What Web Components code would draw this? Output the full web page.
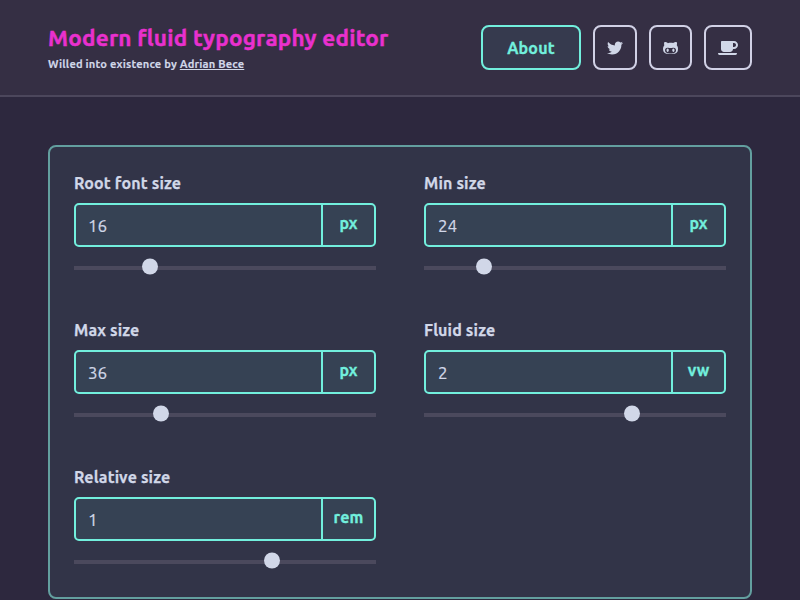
<!DOCTYPE html>
<html lang="en">
<head>
<meta charset="utf-8">
<title>Modern fluid typography editor</title>
<style>
html,body{margin:0;height:600px;overflow:hidden}
body{background:#2d283e;color:#d1d7e8;font-family:Ubuntu,"Noto Sans","Open Sans",sans-serif;font-size:16px}
</style>
</head>
<body>
<fluid-app></fluid-app>
<script>
const define = (name, html, setup) => customElements.define(name, class extends HTMLElement {
  constructor() {
    super();
    this.attachShadow({ mode: 'open' }).innerHTML = html;
  }
  connectedCallback() { if (setup) setup(this, this.shadowRoot); }
});

define('nav-button', `
<style>
:host{box-sizing:border-box;display:flex;align-items:center;justify-content:center;height:45px;border:2px solid #d1d1e6;border-radius:8px;color:#d1d7e8}
:host([primary]){border-color:#72efdd;color:#72efdd;background:#363a4e;font-weight:700;font-size:16px;letter-spacing:.2px;-webkit-text-stroke:.3px currentColor}
</style><slot></slot>`);

define('app-header', `
<style>
:host{box-sizing:border-box;display:flex;justify-content:space-between;align-items:flex-start;height:97px;padding:25px 48px 0;background:#352f44;border-bottom:2px solid #4c475c}
h1{margin:0;color:#e930ce;font-size:22.5px;line-height:26px;font-weight:700;white-space:nowrap;letter-spacing:.22px;-webkit-text-stroke:.4px currentColor}
p{margin:6px 0 0;font-size:11.11px;line-height:14px;font-weight:700;white-space:nowrap;letter-spacing:.17px;-webkit-text-stroke:.15px currentColor}
a{color:inherit;text-decoration:underline}
nav{display:flex;gap:12px}
svg{display:block;height:16px;fill:currentColor}
</style>
<div><h1>Modern fluid typography editor</h1><p>Willed into existence by <a href="#">Adrian Bece</a></p></div>
<nav>
<nav-button primary style="width:100px">About</nav-button>
<nav-button style="width:44px"><svg viewBox="0 0 512 512"><path d="M459.37 151.716c.325 4.548.325 9.097.325 13.645 0 138.72-105.583 298.558-298.558 298.558-59.452 0-114.68-17.219-161.137-47.106 8.447.974 16.568 1.299 25.34 1.299 49.055 0 94.213-16.568 130.274-44.832-46.132-.975-84.792-31.188-98.112-72.772 6.498.974 12.995 1.624 19.818 1.624 9.421 0 18.843-1.3 27.614-3.573-48.081-9.747-84.143-51.98-84.143-102.985v-1.299c13.969 7.797 30.214 12.67 47.431 13.319-28.264-18.843-46.781-51.005-46.781-87.391 0-19.492 5.197-37.36 14.294-52.954 51.655 63.675 129.3 105.258 216.365 109.807-1.624-7.797-2.599-15.918-2.599-24.04 0-57.828 46.782-104.934 104.934-104.934 30.213 0 57.502 12.67 76.67 33.137 23.715-4.548 46.456-13.32 66.599-25.34-7.798 24.366-24.366 44.833-46.132 57.827 21.117-2.273 41.584-8.122 60.426-16.243-14.292 20.791-32.161 39.308-52.628 54.253z"/></svg></nav-button>
<nav-button style="width:43px"><svg viewBox="0 0 480 512"><path d="M186.1 328.7c0 20.9-10.9 55.1-36.7 55.1s-36.7-34.2-36.7-55.1 10.9-55.1 36.7-55.1 36.7 34.2 36.7 55.1zM480 278.2c0 31.9-3.2 65.7-17.5 95-37.9 76.6-142.1 74.8-216.7 74.8-75.8 0-186.2 2.7-225.6-74.8-14.6-29-20.2-63.1-20.2-95 0-41.9 13.9-81.5 41.5-113.6-5.2-15.8-7.7-32.4-7.7-48.8 0-21.5 4.9-32.3 14.6-51.8 45.3 0 74.3 9 108.8 36 29-6.9 58.8-10 88.7-10 27 0 54.2 2.9 80.4 9.2 34-26.7 63-35.2 107.8-35.2 9.8 19.5 14.6 30.3 14.6 51.8 0 16.4-2.6 32.7-7.7 48.2 27.5 32.4 39 72.3 39 114.2zm-64.3 50.5c0-43.9-26.7-82.6-73.5-82.6-18.9 0-37 3.4-56 6-14.9 2.3-29.8 3.2-45.1 3.2-15.2 0-30.1-.9-45.1-3.2-18.7-2.6-37-6-56-6-46.8 0-73.5 38.7-73.5 82.6 0 87.8 80.4 101.3 150.4 101.3h48.2c70.3 0 150.6-13.4 150.6-101.3zm-82.6-55.1c-25.8 0-36.7 34.2-36.7 55.1s10.9 55.1 36.7 55.1 36.7-34.2 36.7-55.1-10.9-55.1-36.7-55.1z"/></svg></nav-button>
<nav-button style="width:48px"><svg viewBox="0 0 640 512"><path d="M192 384h192c53 0 96-43 96-96h32c70.6 0 128-57.4 128-128S582.6 32 512 32H120c-13.3 0-24 10.7-24 24v232c0 53 43 96 96 96zM512 96c35.3 0 64 28.7 64 64s-28.7 64-64 64h-32V96h32zm47.7 384H48.3c-47.6 0-61-64-36-64h583.3c25 0 11.8 64-35.9 64z"/></svg></nav-button>
</nav>`);

define('range-slider', `
<style>
:host{display:grid;height:16px;margin-top:11px;align-items:center}
.track,.thumb{grid-area:1/1}
.track{height:4px;background:#4b495d;margin-top:3px}
.thumb{width:16px;height:16px;border-radius:50%;background:#d1d7e8;margin-left:var(--at,0);transform:translateY(.5px)}
</style><div class="track"></div><div class="thumb"></div>`);

define('size-field', `
<style>
:host{display:block;height:103px}
label{display:block;height:24px;line-height:25px;margin-bottom:8px;font-size:16px;font-weight:700;letter-spacing:.14px;-webkit-text-stroke:.25px currentColor}
.box{box-sizing:border-box;display:flex;height:44px;border:2px solid #72efdd;border-radius:5px;background:#364254}
.value{flex:1;padding-left:12px;line-height:42px;font-size:17px;-webkit-text-stroke:.2px currentColor}
.unit{box-sizing:border-box;width:53px;border-left:2px solid #72efdd;text-align:center;line-height:37px;font-size:16px;font-weight:700;color:#72efdd;letter-spacing:.1px;-webkit-text-stroke:.3px currentColor}
</style>
<label></label><div class="box"><div class="value"></div><div class="unit"></div></div><range-slider></range-slider>`,
(el, root) => {
  root.querySelector('label').textContent = el.getAttribute('label');
  root.querySelector('.value').textContent = el.getAttribute('value');
  root.querySelector('.unit').textContent = el.getAttribute('unit');
  root.querySelector('range-slider').style.setProperty('--at', el.getAttribute('at') + 'px');
});

define('settings-card', `
<style>
:host{box-sizing:border-box;display:grid;grid-template-columns:302px 302px;column-gap:48px;row-gap:44px;align-content:start;margin:48px 48px 0;height:454px;padding:24px;border:2px solid #639f9f;border-radius:8px;background:#323448}
</style><slot></slot>`);

define('fluid-app', `
<style>:host{display:block}</style>
<app-header></app-header>
<settings-card>
<size-field label="Root font size" value="16" unit="px" at="68.4"></size-field>
<size-field label="Min size" value="24" unit="px" at="52"></size-field>
<size-field label="Max size" value="36" unit="px" at="79"></size-field>
<size-field label="Fluid size" value="2" unit="vw" at="200"></size-field>
<size-field label="Relative size" value="1" unit="rem" at="190.4"></size-field>
</settings-card>`);
</script>
</body>
</html>
